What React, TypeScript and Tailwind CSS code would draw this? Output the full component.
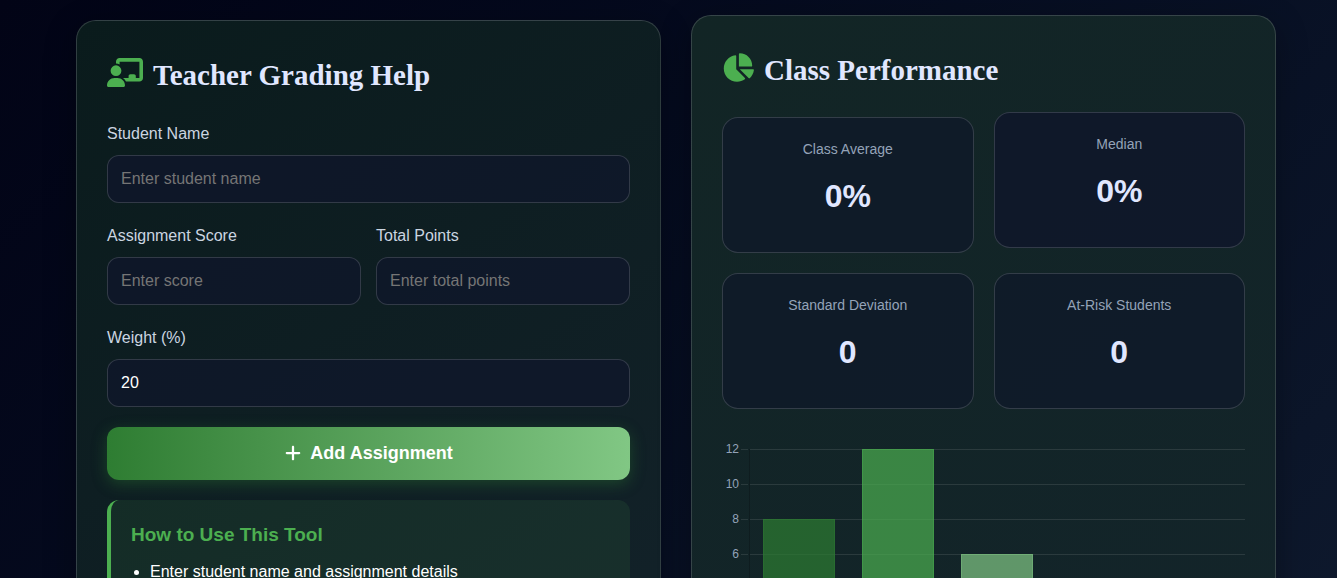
import { useState } from "react";
import type { ReactNode } from "react";
import { FaChalkboardUser, FaChartPie, FaPlus } from "react-icons/fa6";

const stats = [
  { title: "Class Average", value: "0%" },
  { title: "Median", value: "0%", active: true },
  { title: "Standard Deviation", value: "0" },
  { title: "At-Risk Students", value: "0" },
];

const bars = [
  { value: 8, fill: "#2e7d32" },
  { value: 12, fill: "#4caf50" },
  { value: 6, fill: "#81c784" },
  { value: 3, fill: "#ffb74d" },
  { value: 1, fill: "#e57373" },
];

const ticks = [12, 10, 8, 6, 4, 2, 0];

const CardTitle = ({ icon, children }: { icon: ReactNode; children: ReactNode }) => (
  <h2 className="flex items-center gap-[10px] font-['Liberation_Serif',serif] text-[29px] leading-[48px] font-bold text-[#e0e7ff]">
    <span className="pb-1.5 text-[#4caf50]">{icon}</span>
    {children}
  </h2>
);

const Field = ({
  id,
  label,
  placeholder,
  type = "text",
  initial = "",
}: {
  id: string;
  label: string;
  placeholder?: string;
  type?: string;
  initial?: string;
}) => {
  const [value, setValue] = useState(initial);

  return (
    <div className="mb-5">
      <label htmlFor={id} className="mb-2 block leading-[26px] text-[#cbd5e1]">
        {label}
      </label>
      <input
        id={id}
        type={type}
        value={value}
        placeholder={placeholder}
        onChange={(e) => setValue(e.target.value)}
        className="block h-12 w-full rounded-xl border border-white/15 bg-[#0f172a]/80 px-[13px] text-white outline-none placeholder:text-[#757575]"
      />
    </div>
  );
};

const GradeChart = () => {
  const step = 99;
  const yFor = (v: number) => 20 + (12 - v) * 17.5;

  return (
    <svg viewBox="0 0 523 260" className="w-full" role="img" aria-label="Grade distribution">
      {ticks.map((tick) => (
        <g key={tick}>
          <rect x={19} y={yFor(tick)} width={7} height={1} fill="#fff" fillOpacity={0.1} />
          <rect x={28} y={yFor(tick)} width={495} height={1} fill="#fff" fillOpacity={0.1} />
          <text x={17} y={yFor(tick) + 4} textAnchor="end" fontSize={12} fill="#94a3b8">
            {tick}
          </text>
        </g>
      ))}
      <rect x={27} y={20} width={1} height={210} fill="#000" fillOpacity={0.2} />
      {bars.map((bar, i) => (
        <g key={bar.fill}>
          <rect
            x={41 + i * step}
            y={yFor(bar.value)}
            width={72}
            height={yFor(0) - yFor(bar.value)}
            fill={bar.fill}
            fillOpacity={0.7}
          />
          <path
            d={`M${41.5 + i * step} 230V${yFor(bar.value) + 0.5}h71V230`}
            fill="none"
            stroke={bar.fill}
            strokeOpacity={0.4}
          />
        </g>
      ))}
    </svg>
  );
};

const App = () => {
  return (
    <div className="min-h-screen bg-linear-135 from-[#020416] to-[#0f1a2e] pl-[15px] font-['Liberation_Sans',Arial,sans-serif] text-base text-white">
      <main className="mx-auto grid max-w-[1200px] grid-cols-2 gap-[30px] py-5">
        <section className="rounded-[20px] border border-white/15 bg-linear-145 from-[#0a1b1c] to-[#13222a] p-[30px] shadow-[0_8px_32px_rgba(0,0,0,0.3)]">
          <CardTitle icon={<FaChalkboardUser className="h-[29px] w-9" />}>
            Teacher Grading Help
          </CardTitle>
          <form className="mt-[22px]" onSubmit={(e) => e.preventDefault()}>
            <Field id="student" label="Student Name" placeholder="Enter student name" />
            <div className="grid grid-cols-2 gap-[15px]">
              <Field id="score" label="Assignment Score" placeholder="Enter score" />
              <Field id="points" label="Total Points" placeholder="Enter total points" />
            </div>
            <Field id="weight" label="Weight (%)" initial="20" />
            <button
              type="submit"
              className="flex h-[53px] w-full items-center justify-center gap-2 rounded-xl bg-linear-to-r from-[#2e7d32] to-[#81c784] pb-0.5 text-lg font-bold text-white shadow-[0_4px_15px_rgba(46,125,50,0.4)]"
            >
              <FaPlus />
              Add Assignment
            </button>
          </form>
          <div className="mt-5 rounded-xl border-l-4 border-[#4caf50] bg-[#4caf50]/10 p-5">
            <h3 className="mb-[9px] text-[19px] leading-[30px] font-bold text-[#4caf50]">
              How to Use This Tool
            </h3>
            <ul className="list-disc pl-[19px] leading-[26px]">
              <li>Enter student name and assignment details</li>
            </ul>
          </div>
        </section>

        <section className="-mt-[5px] rounded-[20px] border border-white/15 bg-linear-145 from-[#122525] to-[#13242a] p-[30px] shadow-[0_8px_32px_rgba(0,0,0,0.3)]">
          <CardTitle icon={<FaChartPie className="h-[29px] w-8" />}>Class Performance</CardTitle>
          <div className="mt-[23px] grid grid-cols-2 gap-5">
            {stats.map((stat) => (
              <div
                key={stat.title}
                className={`rounded-2xl border border-white/15 p-5 text-center ${
                  stat.active ? "-translate-y-[5px] bg-[#0f172a]/90" : "bg-[#0f1929]/80"
                }`}
              >
                <p className="text-[14px] leading-[23px] text-[#94a3b8]">{stat.title}</p>
                <p className="my-[10px] text-[32px] leading-[51px] font-bold text-[#e0e7ff]">
                  {stat.value}
                </p>
              </div>
            ))}
          </div>
          <div className="mt-5">
            <GradeChart />
          </div>
        </section>
      </main>
    </div>
  );
};

export default App;
